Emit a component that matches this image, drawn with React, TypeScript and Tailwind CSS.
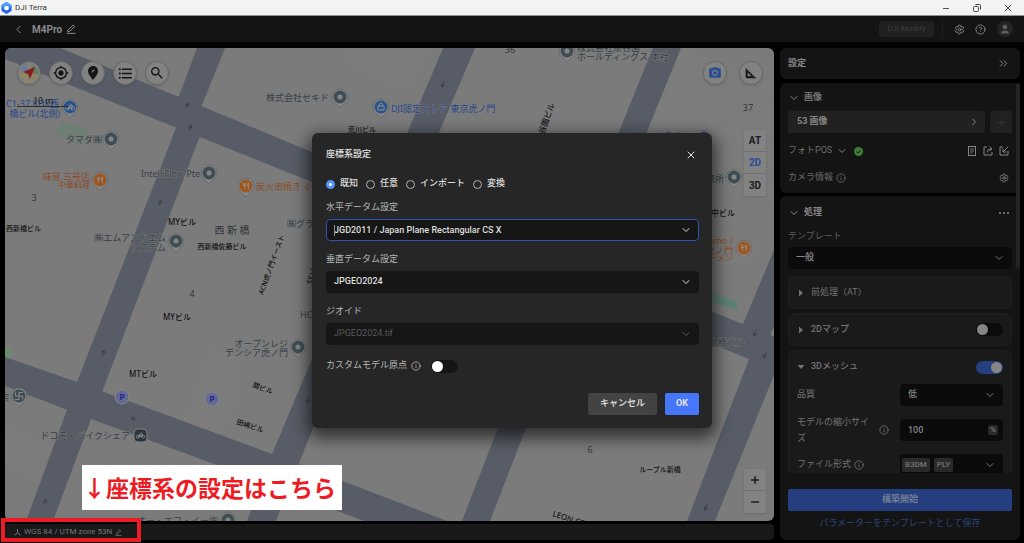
import { useState, type ReactNode } from 'react'
import { ChevronDown, ChevronLeft, ChevronRight, ChevronsRight, CircleHelp, Info, Plus, Settings, X } from 'lucide-react'
import { MdCameraAlt, MdFormatListBulleted, MdMyLocation, MdPedalBike, MdRestaurant, MdSearch, MdSquareFoot } from 'react-icons/md'

const roads = [
  '5,45 53,45 312,152 743,324 774,337 774,370 749,359 312,182 5,59',
  '5,357 77,382 272,454 447,521 364,521 217,465 91,419 5,386',
  '197,48 225,48 196,120 170,120',
  '181,115 208,115 102,392 91,419 53,521 26,521 67,410 77,382',
  '443,48 475,48 313,428 276,521 247,521 272,454',
  '653,48 681,48 526,428 490,521 462,521 498,428',
  '774,250 774,327 770,335 774,337 774,375 715,521 687,521 749,359 743,324'
]

const hatched = [
  '348,48 427,48 408,91 342,63',
  '683,48 774,84 774,202 744,186 647,132',
  '210,345 237,357 233,413 223,433 185,420',
  '5,425 52,445 38,480 5,465'
]

// x, y, rotation
const arrows = [
  [187, 106, 20], [190, 128, 20], [160, 203, 20], [103, 353, 20], [134, 419, -68], [45, 502, 20],
  [443, 84, 200], [308, 400, 200], [706, 507, 200], [755, 333, 200], [765, 355, 200]
]

type Label = {
  text: string
  x: number
  y: number
  color?: 'slate' | 'blue' | 'orange' | 'purple' | 'black' | 'gray'
  anchor?: 'start' | 'middle' | 'end'
  size?: number
  rotate?: number
}

const labels: Label[] = [
  { text: 'C1-37.KDX西', x: 6, y: 107, color: 'blue' },
  { text: '橋ビル(北側)', x: 60, y: 117, color: 'blue', anchor: 'end' },
  { text: 'タマダ㈱', x: 102, y: 143, anchor: 'end' },
  { text: '味覚 三号店', x: 90, y: 180, color: 'orange', anchor: 'end' },
  { text: '中華料理', x: 90, y: 188, color: 'orange', anchor: 'end', size: 8 },
  { text: 'IntelliFlow Pte', x: 200, y: 177, anchor: 'end' },
  { text: '3', x: 34, y: 201, color: 'gray', anchor: 'middle' },
  { text: '西新橋ビル', x: 6, y: 231, color: 'black', size: 7 },
  { text: '㈱エムアンドエム', x: 166, y: 241, anchor: 'end' },
  { text: 'システム', x: 166, y: 251, anchor: 'end' },
  { text: 'MYビル', x: 182, y: 225, color: 'black', anchor: 'middle', size: 8 },
  { text: '西 新 橋', x: 232, y: 234, color: 'gray', anchor: 'middle', size: 10 },
  { text: '西新橋佐藤ビル', x: 222, y: 249, color: 'black', anchor: 'middle', size: 7 },
  { text: '㈱グラン', x: 287, y: 227 },
  { text: 'ACN虎ノ門イースト', x: 263, y: 295, color: 'black', size: 7, rotate: -70 },
  { text: 'SSビル', x: 312, y: 285, color: 'black', size: 8, rotate: -72 },
  { text: '4', x: 192, y: 297, color: 'gray', anchor: 'middle' },
  { text: 'MYビル', x: 177, y: 320, color: 'black', anchor: 'middle', size: 8 },
  { text: 'HOTEL', x: 300, y: 318 },
  { text: 'オープンレジ', x: 288, y: 347, anchor: 'end' },
  { text: 'デンシア虎ノ門', x: 288, y: 356, anchor: 'end' },
  { text: 'MTビル', x: 143, y: 377, color: 'black', anchor: 'middle', size: 8 },
  { text: '関ビル', x: 252, y: 387, color: 'black', size: 7, rotate: 20 },
  { text: '田嶋ビル', x: 236, y: 424, color: 'black', size: 7, rotate: 18 },
  { text: 'ドコモ・バイクシェア', x: 130, y: 439, anchor: 'end' },
  { text: '宗', x: 9, y: 401, anchor: 'end' },
  { text: 'オー・エフ・イー㈱', x: 218, y: 524, anchor: 'end' },
  { text: '株式会社セキド', x: 329, y: 101, anchor: 'end' },
  { text: 'DJI認定ストア 東京虎ノ門', x: 391, y: 112, color: 'blue' },
  { text: '荒川ビル', x: 362, y: 132, color: 'black', anchor: 'middle', size: 7 },
  { text: '炭火串焼き ぐう', x: 256, y: 190, color: 'orange' },
  { text: '36', x: 510, y: 53, color: 'gray', anchor: 'middle' },
  { text: '株式会社泉谷園', x: 577, y: 51 },
  { text: 'ホールディングス 本社', x: 577, y: 60 },
  { text: '渋谷園ビル', x: 541, y: 142, color: 'black', size: 8, rotate: -70 },
  { text: '37', x: 748, y: 111, color: 'gray', anchor: 'middle' },
  { text: 'Brunel Gallery', x: 634, y: 139, color: 'purple' },
  { text: '事務所', x: 724, y: 182, anchor: 'end' },
  { text: '田中ビル', x: 735, y: 216, color: 'black', anchor: 'end', size: 8 },
  { text: 'Ramo /', x: 733, y: 244, color: 'orange', anchor: 'end' },
  { text: '虎ノ門', x: 733, y: 254, color: 'orange', anchor: 'end' },
  { text: 'ラーメン', x: 733, y: 261, color: 'orange', anchor: 'end', size: 8 },
  { text: '新橋ビル', x: 745, y: 346, anchor: 'end' },
  { text: '6', x: 590, y: 453, color: 'gray', anchor: 'middle' },
  { text: 'ルーブル新橋', x: 660, y: 472, color: 'black', anchor: 'middle', size: 7 },
  { text: 'LEON COURT', x: 552, y: 516, color: 'black', size: 8, rotate: 18 }
]

const labelFill = {
  slate: 'fill-[#333e46]',
  blue: 'fill-[#26468b]',
  orange: 'fill-[#8b4a1d]',
  purple: 'fill-[#49328a]',
  black: 'fill-[#111111] font-medium',
  gray: 'fill-[#303438]'
}

// plain place pins
const pins = [
  [340, 97], [111, 139], [209, 173], [176, 241], [298, 347], [567, 51], [734, 177], [228, 520]
]

function Pin({ x, y, className, children }: { x: number; y: number; className: string; children?: ReactNode }) {
  return (
    <g transform={`translate(${x} ${y})`}>
      <path d="M0 11 L-4 7 A8 8 0 1 1 4 7 Z" className="fill-[#868686] stroke-[#6a6a6a]" strokeWidth="1" />
      <circle r="6.5" className={className} />
      {children}
    </g>
  )
}

function StreetMap() {
  return (
    <svg viewBox="5 48 769 473" preserveAspectRatio="xMidYMid slice" className="absolute inset-0 h-full w-full font-['Noto_Sans','Noto_Sans_CJK_JP',sans-serif]">
      <defs>
        <pattern id="hatch" width="3" height="3" patternUnits="userSpaceOnUse" patternTransform="rotate(45)">
          <rect width="3" height="3" fill="#7e7e7e" />
          <rect width="1" height="3" fill="#787878" />
        </pattern>
      </defs>
      {hatched.map(points => <polygon key={points} points={points} fill="url(#hatch)" />)}
      <polygon points="63,121 90,130 82,146 54,134" fill="#6c7f72" />
      <polygon points="5,346 12,350 10,360 5,358" fill="#6c8a72" />
      <polygon points="712,293 738,302 736,310 712,302" fill="#5d8273" />
      {roads.map(points => <polygon key={points} points={points} fill="#575c66" />)}
      {arrows.map(([x, y, r]) => (
        <path key={`${x}-${y}`} d="M0 3V-2M-2 0L0 -3L2 0" transform={`translate(${x} ${y}) rotate(${r})`} fill="none" stroke="#3f4248" strokeWidth="1" />
      ))}
      {labels.map(l => (
        <text
          key={`${l.text}-${l.x}-${l.y}`}
          transform={`translate(${l.x} ${l.y}) rotate(${l.rotate ?? 0})`}
          textAnchor={l.anchor ?? 'start'}
          fontSize={l.size ?? 9}
          stroke="#7d7d7d"
          strokeWidth="1"
          paintOrder="stroke"
          className={labelFill[l.color ?? 'slate']}
        >
          {l.text}
        </text>
      ))}
      {pins.map(([x, y]) => (
        <Pin key={`${x}-${y}`} x={x} y={y} className="fill-[#3f4e55]">
          <circle r="2.5" fill="#868686" />
        </Pin>
      ))}
      {[[100, 180], [246, 186], [744, 248]].map(([x, y]) => (
        <Pin key={x} x={x} y={y} className="fill-[#9c561e]">
          <MdRestaurant x="-4" y="-4" size={8} color="#8f8f8f" />
        </Pin>
      ))}
      <Pin x={70} y={107} className="fill-[#28538c]">
        <MdPedalBike x="-5" y="-5" size={10} color="#8f8f8f" />
      </Pin>
      <Pin x={381} y={107} className="fill-[#28538c]">
        <path d="M-3 -1H3V3H-3ZM-1.5 -1V-2.5A1.5 1.5 0 0 1 1.5 -2.5V-1" fill="none" stroke="#8f8f8f" />
      </Pin>
      <Pin x={19} y={396} className="fill-[#3f4e55]">
        <path d="M-3.500 -3.500V0H3.500V3.500M0 -4V4M0 -3.500H4M-4 3.500H0" fill="none" stroke="#8a8a8a" />
      </Pin>
      <Pin x={704} y={138} className="fill-[#49328a]" />
      {[[122, 397], [212, 399]].map(([x, y]) => (
        <g key={x}>
          <circle cx={x} cy={y} r="7" fill="#656a93" stroke="#84868e" />
          <text x={x} y={y + 3} textAnchor="middle" fontSize="9" fontWeight="700" fill="#2a2696">P</text>
        </g>
      ))}
      <rect x="134" y="429" width="13" height="13" rx="4" fill="#2b353c" stroke="#828282" />
      <MdPedalBike x="136" y="431" size={9} color="#8f8f8f" />
    </svg>
  )
}

function MapButton({ label, children }: { label: string; children: ReactNode }) {
  return (
    <button aria-label={label} className="flex size-6 items-center justify-center rounded-full border border-[#686868] bg-[#828282] text-[#151515] shadow-sm">
      {children}
    </button>
  )
}

function PencilIcon({ size = 10 }: { size?: number }) {
  return (
    <svg width={size} height={size} viewBox="0 0 12 12" fill="none" stroke="currentColor" strokeWidth="1.2">
      <path d="M2 9.2 2.5 7 8.6 1.2 10.4 3 4.4 8.8Z" />
      <path d="M1 11.2H11.5" />
    </svg>
  )
}

function MapView() {
  return (
    <div className="relative min-h-0 flex-1 overflow-hidden rounded-md bg-[#7b7b7b]">
      <StreetMap />
      <div className="absolute left-3 top-[13px] flex gap-2">
        <MapButton label="地図">
          <svg width="20" height="20" viewBox="0 0 20 20">
            <circle cx="10" cy="10" r="10" fill="#858376" />
            <path d="M1 6A10 10 0 0 1 9 0V7L3 9Z" fill="#6f7d92" />
            <path d="M13 1A10 10 0 0 1 19 13L12 11Z" fill="#667a66" />
            <path d="M1 12H19M7 10V20M13 10V19" stroke="#94865a" strokeWidth="2" />
            <path d="M16 4 11 16 9 11 4 9Z" fill="#841b25" />
          </svg>
        </MapButton>
        <MapButton label="現在地"><MdMyLocation size={16} /></MapButton>
        <MapButton label="ピン">
          <svg width="12" height="16" viewBox="0 0 12 16">
            <path d="M6 1A5 5 0 0 0 1 6C1 9.500 6 15 6 15S11 9.500 11 6A5 5 0 0 0 6 1Z" fill="#151515" />
            <path d="M4.300 7.700 4.800 6.300 7 4.300 7.800 5.200 5.700 7.200Z" fill="#828282" />
          </svg>
        </MapButton>
        <MapButton label="一覧"><MdFormatListBulleted size={17} /></MapButton>
        <MapButton label="検索"><MdSearch size={16} /></MapButton>
      </div>
      <div className="absolute left-3 top-12 w-[52px] border-b border-[#303030] text-center text-[9px] leading-[10px] text-[#1b1b1b]">10 m</div>
      <div className="absolute right-[11px] top-[13px] flex gap-3">
        <MapButton label="カメラ"><MdCameraAlt size={14} color="#294d91" /></MapButton>
        <MapButton label="計測"><MdSquareFoot size={16} /></MapButton>
      </div>
      <div className="absolute right-2 top-[82px] flex w-[22px] flex-col divide-y divide-[#707070] rounded-xs bg-[#828282] text-[10px] font-bold text-[#1c1c1c] shadow">
        <button className="h-[22px]">AT</button>
        <button className="h-[22px] text-[#2c4a96]">2D</button>
        <button className="h-[22px]">3D</button>
      </div>
      <div className="absolute bottom-2 right-2 flex w-[22px] flex-col divide-y divide-[#707070] rounded-xs bg-[#828282] text-[#1c1c1c] shadow">
        <button aria-label="拡大" className="flex h-[22px] items-center justify-center">
          <svg width="10" height="10" viewBox="0 0 10 10" stroke="currentColor" strokeWidth="1.5"><path d="M1 5H9M5 1V9" /></svg>
        </button>
        <button aria-label="縮小" className="flex h-[22px] items-center justify-center">
          <svg width="10" height="10" viewBox="0 0 10 10" stroke="currentColor" strokeWidth="1.5"><path d="M1 5H9" /></svg>
        </button>
      </div>
    </div>
  )
}

function TitleBar() {
  return (
    <div className="flex h-4 shrink-0 items-center border-b border-[#8b9494] bg-[#f3f3f3] pl-px text-[#333]">
      <svg width="11" height="12" viewBox="0 0 11 12">
        <path d="M5.5 0 10.5 3V9L5.5 12 .5 9V3Z" fill="#2563eb" />
        <path d="M5.5 0 10.5 3V6L8 4.5 5.5 3 .5 6V3Z" fill="#4aa3ff" />
        <path d="M5.5 3.5 7.8 4.8V7.3L5.5 8.5 3.2 7.3V4.8Z" fill="#fff" />
      </svg>
      <span className="ml-[3px] flex-1 text-[8px]">DJI Terra</span>
      <div className="flex gap-[21px] pr-[11px]">
        <button aria-label="最小化"><svg width="10" height="10" viewBox="0 0 10 10" stroke="#555"><path d="M2 5.5H8" /></svg></button>
        <button aria-label="元に戻す"><svg width="10" height="10" viewBox="0 0 10 10" fill="none" stroke="#444"><rect x="1.5" y="3.5" width="5" height="5" rx="1" /><path d="M3.5 1.5H7.5Q8.5 1.5 8.5 2.5V6.5" /></svg></button>
        <button aria-label="閉じる"><svg width="10" height="10" viewBox="0 0 10 10" stroke="#444"><path d="M2 2 8 8M8 2 2 8" /></svg></button>
      </div>
    </div>
  )
}

function Header() {
  return (
    <header className="flex h-[26px] shrink-0 items-center bg-[#141414] pl-3 pr-[11px] text-[#8a8a8a]">
      <button aria-label="戻る"><ChevronLeft size={13} strokeWidth={1.75} /></button>
      <h1 className="ml-[7px] text-[10px] font-bold">M4Pro</h1>
      <button aria-label="名前を変更" className="ml-1"><PencilIcon /></button>
      <div className="flex-1" />
      <button disabled className="h-4 w-[55px] rounded-xs bg-[#202020] text-[8px] font-medium text-[#383838]">DJI Modify</button>
      <div className="ml-2 h-4 w-px bg-[#202020]" />
      <button aria-label="設定" className="ml-[11px]"><Settings size={11} /></button>
      <button aria-label="ヘルプ" className="ml-[10px]"><CircleHelp size={11} /></button>
      <button aria-label="アカウント" className="ml-[11px] flex size-4 items-center justify-center rounded-full bg-[#242424]">
        <svg width="10" height="10" viewBox="0 0 10 10" fill="#5f5f5f"><circle cx="5" cy="3" r="2.3" /><path d="M1 9.5Q1 6.5 5 6.5T9 9.5Z" /></svg>
      </button>
    </header>
  )
}

function Switch({ label, defaultChecked = false, dim = false }: { label: string; defaultChecked?: boolean; dim?: boolean }) {
  return (
    <input
      type="checkbox"
      role="switch"
      aria-label={label}
      defaultChecked={defaultChecked}
      className={`h-[13px] w-[27px] shrink-0 appearance-none rounded-full p-px before:block before:size-[11px] before:rounded-full checked:bg-[#24407f] checked:before:translate-x-[14px] ${dim ? 'bg-[#0b0b0b] before:bg-[#868686]' : 'bg-[#151515] before:bg-white'}`}
    />
  )
}

function PanelSelect({ id, value }: { id: string; value: string }) {
  return (
    <div className="relative">
      <select id={id} className="block h-[22px] w-full appearance-none rounded-sm bg-[#0b0b0b] px-2 text-[9px] font-medium text-[#858585]">
        <option>{value}</option>
      </select>
      <ChevronDown size={12} className="pointer-events-none absolute right-[7px] top-[5px]" />
    </div>
  )
}

function Triangle({ open = false }: { open?: boolean }) {
  return (
    <svg width="8" height="8" viewBox="0 0 8 8" fill="currentColor" className="mr-1.5">
      <path d={open ? 'M0.5 2H7.5L4 6Z' : 'M2 0.5V7.5L6 4Z'} />
    </svg>
  )
}

function ImagesCard() {
  return (
    <section className="rounded-md bg-[#141414] px-2 pb-[5px] pt-[5px]">
      <button className="flex h-5 items-center gap-1 font-medium text-[#858585]">
        <ChevronDown size={12} />
        画像
      </button>
      <div className="mt-[3px] flex h-[22px] gap-[5px]">
        <button className="flex flex-1 items-center justify-between rounded-xs bg-[#212121] px-[9px] font-bold text-[#858585]">
          53 画像
          <ChevronRight size={12} className="-mr-1" />
        </button>
        <button aria-label="画像を追加" className="flex w-[22px] items-center justify-center rounded-xs bg-[#212121] text-[#353535]">
          <Plus size={11} />
        </button>
      </div>
      <div className="mt-2 flex h-5 items-center text-[#6c6c6c]">
        <span>フォトPOS</span>
        <ChevronDown size={12} className="ml-1 text-[#858585]" />
        <svg width="9" height="9" viewBox="0 0 9 9" className="ml-1.5"><circle cx="4.5" cy="4.5" r="4.5" fill="#3c7e36" /><path d="M2.5 4.5 4 6 6.5 3.3" stroke="#141414" fill="none" /></svg>
        <div className="ml-auto flex gap-1.5 pr-[3px] text-[#858585]">
          <button aria-label="レポート"><svg width="10" height="10" viewBox="0 0 10 10" fill="none" stroke="currentColor"><rect x="1.5" y=".5" width="7" height="9" /><path d="M3 3H7M3 5H7M3 7H5.5" strokeWidth=".8" /></svg></button>
          <button aria-label="エクスポート"><svg width="10" height="10" viewBox="0 0 10 10" fill="none" stroke="currentColor"><path d="M4 1H1V9H9V6M4 6.5Q4 3 8 3M6.5 .5 9 3 6.5 5" /></svg></button>
          <button aria-label="インポート"><svg width="10" height="10" viewBox="0 0 10 10" fill="none" stroke="currentColor"><path d="M4 1H1V9H9V5M9 1 4.5 5.5M4 2.5V6H7.5" /></svg></button>
        </div>
      </div>
      <div className="mt-[7px] flex h-5 items-center text-[#6c6c6c]">
        <span>カメラ情報</span>
        <Info size={10} className="ml-[3px]" />
        <button aria-label="カメラ設定" className="ml-auto pr-[3px] text-[#858585]"><Settings size={10} /></button>
      </div>
    </section>
  )
}

function ProcessingCard() {
  return (
    <section className="flex min-h-0 flex-1 flex-col rounded-md bg-[#141414] px-2 pb-[3px] pt-[7px]">
      <div className="min-h-0 flex-1 overflow-hidden">
        <div className="flex h-5 items-center font-bold text-[#858585]">
          <button className="flex items-center gap-1"><ChevronDown size={12} />処理</button>
          <button aria-label="その他" className="ml-auto mr-[3px]">
            <svg width="10" height="4" viewBox="0 0 10 4" fill="currentColor"><circle cx="1" cy="2" r="1" /><circle cx="5" cy="2" r="1" /><circle cx="9" cy="2" r="1" /></svg>
          </button>
        </div>
        <label htmlFor="template" className="mt-1 flex h-5 items-center text-[#5e5e5e]">テンプレート</label>
        <PanelSelect id="template" value="一般" />
        <div className="mt-[7px] flex flex-col gap-1">
          <div className="flex h-[33px] items-center rounded-md border border-[#1e1e1e] bg-[#1a1a1a] px-2">
            <Triangle />前処理（AT）
          </div>
          <div className="flex h-[33px] items-center rounded-md border border-[#1e1e1e] bg-[#1a1a1a] px-2">
            <Triangle /><span className="flex-1 font-medium">2Dマップ</span>
            <Switch label="2Dマップ" dim />
          </div>
          <div className="rounded-md border border-[#1e1e1e] bg-[#1a1a1a] px-2 pb-3">
            <div className="flex h-8 items-center">
              <Triangle open /><span className="flex-1 font-medium">3Dメッシュ</span>
              <Switch label="3Dメッシュ" defaultChecked dim />
            </div>
            <div className="mt-px grid grid-cols-2 items-center gap-y-[13px]">
              <label htmlFor="quality">品質</label>
              <PanelSelect id="quality" value="低" />
              <div className="flex h-[22px] items-center">
                <label htmlFor="scale" className="w-[78px] leading-4">モデルの縮小サイズ</label>
                <Info size={10} className="ml-1" />
              </div>
              <div className="relative">
                <input id="scale" defaultValue="100" className="block h-[22px] w-full rounded-sm bg-[#0b0b0b] px-2 font-medium text-[#858585]" />
                <span className="absolute right-[5px] top-[6px] rounded-xs bg-[#2a2a2a] px-0.5 text-[8px] font-bold leading-[10px]">%</span>
              </div>
              <span className="flex items-center gap-[3px]">ファイル形式<Info size={10} /></span>
              <button aria-label="ファイル形式" className="flex h-[22px] items-center gap-1 rounded-sm bg-[#0b0b0b] pl-[2px] pr-[7px] text-[8px] font-medium">
                <span className="rounded-xs bg-[#2a2a2a] px-[3px] leading-[14px]">B3DM</span>
                <span className="rounded-xs bg-[#2a2a2a] px-[3px] leading-[14px]">PLY</span>
                <ChevronDown size={12} className="ml-auto" />
              </button>
            </div>
          </div>
        </div>
      </div>
      <button className="mt-4 h-[22px] shrink-0 rounded-xs bg-[#243e7f] font-medium text-[#7f8697]">構築開始</button>
      <a href="#save" className="flex h-[26px] shrink-0 items-center justify-center text-[#2b4478]">パラメーターをテンプレートとして保存</a>
    </section>
  )
}

function SettingsPanel() {
  return (
    <aside className="flex w-60 shrink-0 flex-col gap-1 text-[9px] text-[#747474]">
      <div className="flex h-[31px] shrink-0 items-center justify-between rounded-md bg-[#141414] pl-2 pr-2.5 text-[#8a8a8a]">
        <h2 className="font-bold">設定</h2>
        <button aria-label="パネルを閉じる"><ChevronsRight size={13} strokeWidth={1.75} /></button>
      </div>
      <div className="relative flex min-h-0 flex-1 flex-col gap-[3px]">
        <ImagesCard />
        <ProcessingCard />
        <div className="absolute right-0 top-0 h-[186px] w-1 rounded-full bg-[#242424]" />
      </div>
    </aside>
  )
}

const modes = ['既知', '任意', 'インポート', '変換']

function CoordinateDialog() {
  const [mode, setMode] = useState('既知')

  return (
    <div role="dialog" aria-labelledby="dialog-title" className="w-[400px] rounded-md bg-[#262626] pb-[13px] pl-3.5 pr-[13px] pt-3 text-[9px] text-[#b8b8b8] shadow-[0_6px_16px_4px_rgba(0,0,0,0.6)]">
      <div className="flex h-5 items-center justify-between text-[#e6e6e6]">
        <h2 id="dialog-title" className="font-medium">座標系設定</h2>
        <button aria-label="閉じる" className="mr-[2px]"><X size={12} /></button>
      </div>
      <div className="mt-[9px] flex h-5 items-center gap-2 font-medium text-[#dedede]">
        {modes.map(m => (
          <label key={m} className="flex items-center gap-[5px]">
            <input
              type="radio"
              name="mode"
              checked={mode === m}
              onChange={() => setMode(m)}
              className="size-[9px] appearance-none rounded-full border border-[#b0b0b0] checked:border-[3px] checked:border-[#4f96f8] checked:bg-white"
            />
            {m}
          </label>
        ))}
      </div>
      <label htmlFor="horizontal" className="mt-1 flex h-5 items-center">水平データム設定</label>
      <div className="relative mt-px">
        <input
          id="horizontal"
          role="combobox"
          aria-expanded="false"
          defaultValue="JGD2011 / Japan Plane Rectangular CS X"
          className="block h-[22px] w-full rounded-sm border border-[#2f52b0] bg-[#161616] px-[7px] font-medium text-[#dedede]"
        />
        <span className="absolute left-2 top-[6px] h-[11px] w-px bg-[#8f8f8f]" />
        <ChevronDown size={12} className="pointer-events-none absolute right-[7px] top-[5px] text-[#dedede]" />
      </div>
      <label htmlFor="vertical" className="mt-[9px] flex h-5 items-center">垂直データム設定</label>
      <div className="relative mt-px">
        <select id="vertical" className="block h-[22px] w-full appearance-none rounded-sm bg-[#161616] px-2 font-medium text-[#dedede]">
          <option>JPGEO2024</option>
        </select>
        <ChevronDown size={12} className="pointer-events-none absolute right-[7px] top-[5px] text-[#dedede]" />
      </div>
      <label htmlFor="geoid" className="mt-[9px] flex h-5 items-center">ジオイド</label>
      <div className="relative mt-px">
        <select id="geoid" disabled className="block h-[22px] w-full appearance-none rounded-sm bg-[#161616] px-2 text-[#585858] opacity-100">
          <option>JPGEO2024.tif</option>
        </select>
        <ChevronDown size={12} className="pointer-events-none absolute right-[7px] top-[5px] text-[#585858]" />
      </div>
      <div className="mt-[11px] flex h-5 items-center">
        <span>カスタムモデル原点</span>
        <Info size={10} className="ml-1 mr-2.5" />
        <Switch label="カスタムモデル原点" />
      </div>
      <div className="mt-[17px] flex justify-end gap-2 font-medium text-[#e6e6e6]">
        <button className="h-[22px] w-[69px] rounded-xs bg-[#434343]">キャンセル</button>
        <button className="h-[22px] w-[34px] rounded-xs bg-[#4677fa] font-bold">OK</button>
      </div>
    </div>
  )
}

export default function App() {
  return (
    <div className="relative flex h-screen min-h-[543px] flex-col overflow-hidden bg-black font-['Roboto','Noto_Sans_CJK_JP',sans-serif]">
      <TitleBar />
      <div className="relative flex min-h-0 flex-1 flex-col">
        <Header />
        <main className="flex min-h-0 flex-1 gap-1.5 pb-[3px] pl-[5px] pr-1 pt-1.5">
          <div className="flex min-w-0 flex-1 flex-col gap-[3px]">
            <MapView />
            <div className="flex h-4 shrink-0 items-center gap-[3px] rounded-sm bg-[#191919] pl-[9px] text-[8px] text-[#757575]">
              <svg width="7" height="8" viewBox="0 0 7 8" fill="none" stroke="currentColor"><path d="M3.5 1V5L.5 7M3.5 5 6.5 7" /></svg>
              <span>WGS 84 / UTM zone 53N</span>
              <button aria-label="座標系を編集"><PencilIcon size={7} /></button>
            </div>
          </div>
          <SettingsPanel />
        </main>

        <div className="absolute inset-0 flex items-center justify-center pt-[2px]">
          <CoordinateDialog />
        </div>
      </div>

      {/* Callout pointing at the status bar */}
      <div className="absolute bottom-px left-px h-6 w-[140px] border-4 border-[#ed1c24]" />
      <p className="absolute bottom-[33px] left-[82px] flex h-[45px] w-[260px] items-center whitespace-nowrap bg-white pl-px font-['Noto_Sans_CJK_JP',sans-serif] text-[23px] font-bold text-[#ed1c24]">
        ↓座標系の設定はこちら
      </p>
    </div>
  )
}
